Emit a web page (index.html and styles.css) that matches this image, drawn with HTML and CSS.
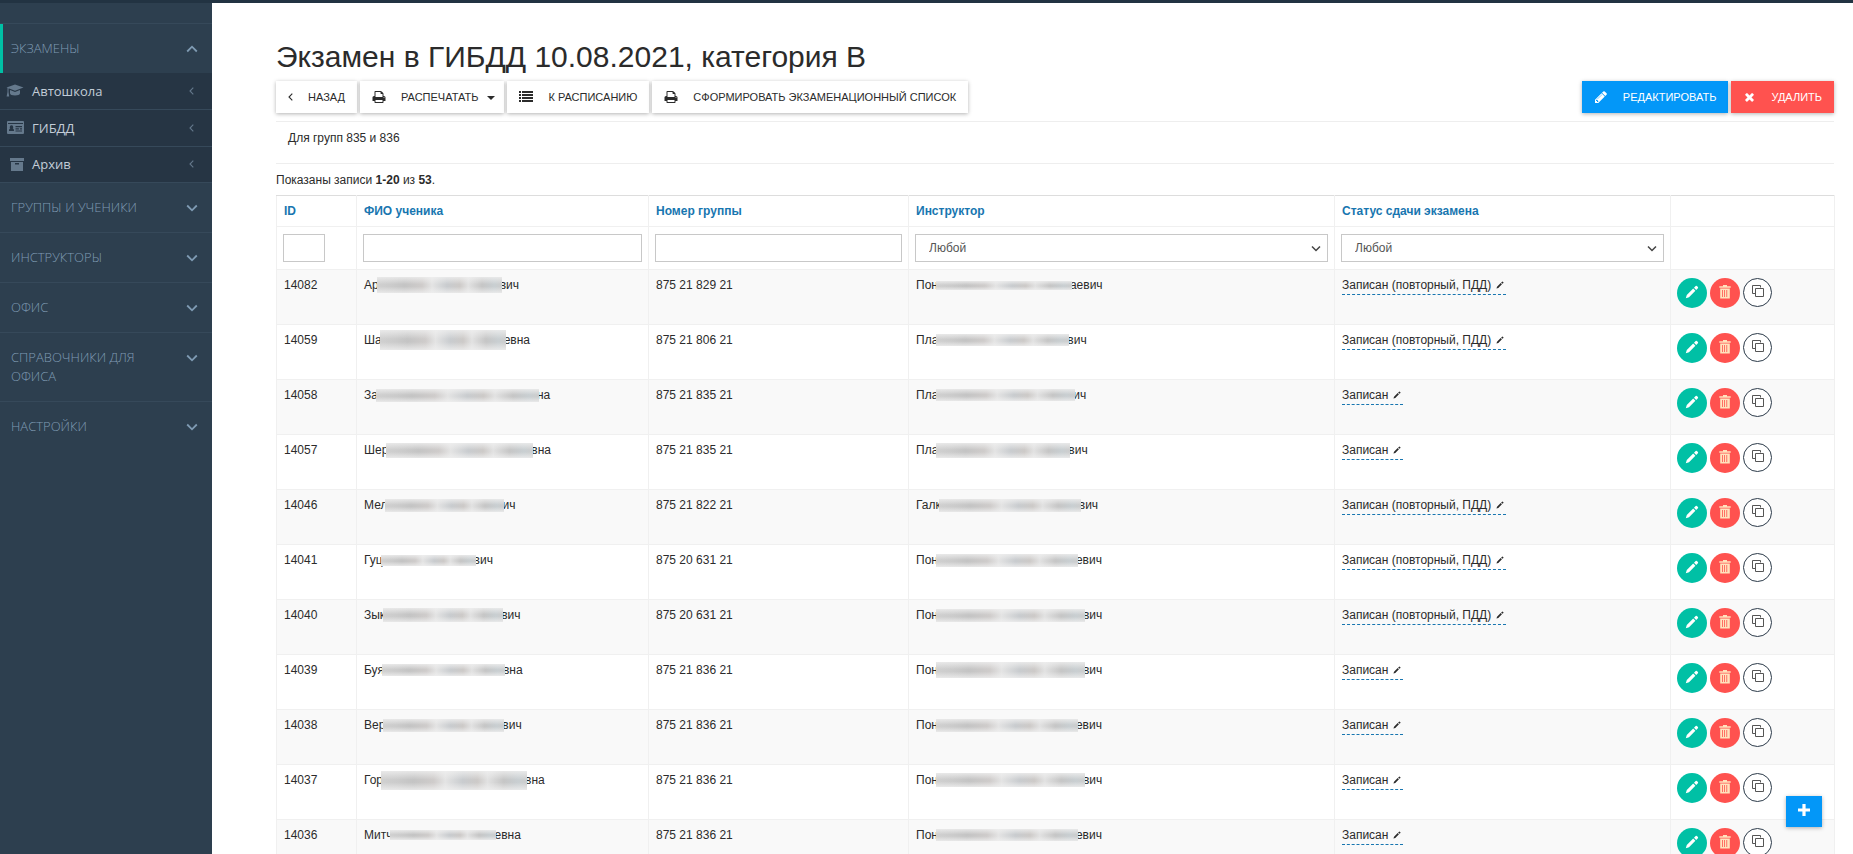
FILE: index.html
```html
<!DOCTYPE html>
<html lang="ru">
<head>
<meta charset="utf-8">
<title>Экзамен в ГИБДД</title>
<link rel="stylesheet" href="styles.css">
</head>
<body>
<svg class="sprite" aria-hidden="true">
  <symbol id="i-print" viewBox="0 0 1792 1792"><path d="M448 1536h896v-256h-896v256zm0-640h896v-384h-160q-40 0-68-28t-28-68v-160h-640v640zm1152 64q0-26-19-45t-45-19-45 19-19 45 19 45 45 19 45-19 19-45zm128 0v416q0 13-9.5 22.5t-22.5 9.5h-224v160q0 40-28 68t-68 28h-960q-40 0-68-28t-28-68v-160h-224q-13 0-22.5-9.5t-9.5-22.5v-416q0-79 56.5-135.5t135.5-56.5h64v-544q0-40 28-68t68-28h672q40 0 88 20t76 48l152 152q28 28 48 76t20 88v256h64q79 0 135.5 56.5t56.5 135.5z"/></symbol>
  <symbol id="i-pencil" viewBox="0 0 1792 1792"><path d="M491 1536l91-91-235-235-91 91v107h128v128h107zm523-928q0-22-22-22-10 0-17 7l-542 542q-7 7-7 17 0 22 22 22 10 0 17-7l542-542q7-7 7-17zm-54-192l416 416-832 832h-416v-416zm683 96q0 53-37 90l-166 166-416-416 166-165q36-38 90-38 53 0 91 38l235 234q37 39 37 91z"/></symbol>
  <symbol id="i-times" viewBox="0 0 1792 1792"><path d="M1490 1322q0 40-28 68l-136 136q-28 28-68 28t-68-28l-294-294-294 294q-28 28-68 28t-68-28l-136-136q-28-28-28-68t28-68l294-294-294-294q-28-28-28-68t28-68l136-136q28-28 68-28t68 28l294 294 294-294q28-28 68-28t68 28l136 136q28 28 28 68t-28 68l-294 294 294 294q28 28 28 68z"/></symbol>
  <symbol id="i-list" viewBox="0 0 14 12"><path d="M0 0h2v2H0zM3 0h11v2H3zM0 3h2v2H0zM3 3h11v2H3zM0 6h2v2H0zM3 6h11v2H3zM0 9h2v2H0zM3 9h11v2H3z"/></symbol>
  <symbol id="i-left" viewBox="0 0 5 8"><path d="M4.300.6 1 4l3.300 3.400" fill="none" stroke="currentColor" stroke-width="1.100"/></symbol>
  <symbol id="i-down" viewBox="0 0 12 8"><path d="M1.200 1.500 6 6.300l4.800-4.800" fill="none" stroke="currentColor" stroke-width="1.800"/></symbol>
  <symbol id="i-up" viewBox="0 0 12 8"><path d="M1.200 6.500 6 1.700l4.800 4.800" fill="none" stroke="currentColor" stroke-width="1.800"/></symbol>
  <symbol id="i-school" viewBox="0 0 18 12"><path d="M9 0l8.500 3L9 6.200.5 3zM4 5.500l5 1.900 5-1.900v3.200c0 1.300-2.200 2.300-5 2.300s-5-1-5-2.300zM1.500 3.500h1v4l.7 4.500H.6l.9-4.500z"/></symbol>
  <symbol id="i-card" viewBox="0 0 17 13"><path fill-rule="evenodd" d="M1 0h15a1 1 0 0 1 1 1v11a1 1 0 0 1-1 1H1a1 1 0 0 1-1-1V1a1 1 0 0 1 1-1zM1 2v1h15V2zM4.500 4.200a1.700 1.900 0 0 0-1.200 3.300C2.300 7.800 2 8.500 2 10h5c0-1.500-.3-2.200-1.300-2.500a1.700 1.900 0 0 0-1.200-3.300zM8.500 5v1.200H15V5zM8.500 7.200v1.200h3.400V7.200zm4.400 0v1.200H15V7.200zM8.500 9.500v1H15v-1z"/></symbol>
  <symbol id="i-box" viewBox="0 0 14 13"><path fill-rule="evenodd" d="M0 0h14v3H0zM1 4h12v9H1zM5 5v1.400h4V5z"/></symbol>
  <symbol id="i-edit" viewBox="0 0 14 14"><path d="M.8 13.200l1-3.200 6.400-6.400 2.200 2.200L4 12.200zM9 2.800l1.700-1.700q.6-.5 1.200 0l1 1q.5.600 0 1.200L11.200 5z"/></symbol>
  <symbol id="i-trash" viewBox="0 0 12 14"><path fill-rule="evenodd" d="M4 0h4v1.300h3.700v1.400H.3V1.300H4zM1.200 3.500h9.600V13.500H1.200zM3 5v7h.8V5zm2.200 0v7H6V5zm2.200 0v7h.8V5z"/></symbol>
  <symbol id="i-copy" viewBox="0 0 14 14"><path d="M4.500 9.500h-3v-8h8v2M4.500 4.500h8v8h-8z" fill="none" stroke="currentColor"/></symbol>
  <symbol id="i-plus" viewBox="0 0 12 12"><path d="M4.400 0h3.200v4.400H12v3.200H7.600V12H4.400V7.600H0V4.400h4.400z"/></symbol>
</svg>
<div class="topbar"></div>
<div class="shell">
  <nav class="sidebar">
    <ul class="menu">
      <li class="menu-item is-active">
        <a class="menu-link" href="#"><span>Экзамены</span><svg class="arrow"><use href="#i-up"/></svg></a>
        <ul class="submenu">
          <li><a class="sub-link" href="#"><svg class="sub-icon" width="18" height="13"><use href="#i-school"/></svg><span>Автошкола</span><svg class="sub-arrow"><use href="#i-left"/></svg></a></li>
          <li><a class="sub-link" href="#"><svg class="sub-icon icon-card" width="17" height="13"><use href="#i-card"/></svg><span>ГИБДД</span><svg class="sub-arrow"><use href="#i-left"/></svg></a></li>
          <li><a class="sub-link" href="#"><svg class="sub-icon icon-box" width="14" height="13"><use href="#i-box"/></svg><span>Архив</span><svg class="sub-arrow"><use href="#i-left"/></svg></a></li>
        </ul>
      </li>
      <li class="menu-item"><a class="menu-link" href="#"><span>Группы и ученики</span><svg class="arrow"><use href="#i-down"/></svg></a></li>
      <li class="menu-item"><a class="menu-link" href="#"><span>Инструкторы</span><svg class="arrow"><use href="#i-down"/></svg></a></li>
      <li class="menu-item"><a class="menu-link" href="#"><span>Офис</span><svg class="arrow"><use href="#i-down"/></svg></a></li>
      <li class="menu-item"><a class="menu-link" href="#"><span>Справочники для офиса</span><svg class="arrow"><use href="#i-down"/></svg></a></li>
      <li class="menu-item"><a class="menu-link" href="#"><span>Настройки</span><svg class="arrow"><use href="#i-down"/></svg></a></li>
    </ul>
  </nav>
  <main class="content">
    <h1>Экзамен в ГИБДД 10.08.2021, категория B</h1>
    <div class="toolbar">
      <button class="btn" type="button"><svg width="5" height="8"><use href="#i-left"/></svg>Назад</button>
      <button class="btn" type="button"><svg width="14" height="14"><use href="#i-print"/></svg>Распечатать<i class="caret"></i></button>
      <button class="btn" type="button"><svg width="14" height="12"><use href="#i-list"/></svg>К расписанию</button>
      <button class="btn" type="button"><svg width="14" height="14"><use href="#i-print"/></svg>Сформировать экзаменационный список</button>
      <span class="spacer"></span>
      <button class="btn btn-primary" type="button"><svg width="14" height="14"><use href="#i-pencil"/></svg>Редактировать</button>
      <button class="btn btn-danger" type="button"><svg width="13" height="14"><use href="#i-times"/></svg>Удалить</button>
    </div>
    <p class="note">Для групп 835 и 836</p>
    <p class="summary">Показаны записи <b>1-20</b> из <b>53</b>.</p>
    <table class="grid">
      <colgroup><col class="c-id"><col class="c-name"><col class="c-group"><col class="c-teacher"><col class="c-status"><col class="c-actions"></colgroup>
      <thead>
        <tr><th><a href="#">ID</a></th><th><a href="#">ФИО ученика</a></th><th><a href="#">Номер группы</a></th><th><a href="#">Инструктор</a></th><th><a href="#">Статус сдачи экзамена</a></th><th></th></tr>
        <tr class="filters">
          <td><input class="field field-id" type="text" aria-label="ID"></td>
          <td><input class="field" type="text" aria-label="ФИО ученика"></td>
          <td><input class="field" type="text" aria-label="Номер группы"></td>
          <td><div class="select"><select class="field" aria-label="Инструктор"><option>Любой</option></select><svg width="10" height="7"><use href="#i-down"/></svg></div></td>
          <td><div class="select"><select class="field" aria-label="Статус сдачи экзамена"><option>Любой</option></select><svg width="10" height="7"><use href="#i-down"/></svg></div></td>
          <td></td>
        </tr>
      </thead>
      <tbody id="rows"></tbody>
    </table>
  </main>
</div>
<button class="fab" type="button" aria-label="Добавить"><svg width="12" height="12"><use href="#i-plus"/></svg></button>
<script src="rows.js"></script>
</body>
</html>
```
FILE: rows.js
```js
// id, student [start, hidden width, hidden height, end], group, instructor [same], status
const full = 'Записан (повторный, ПДД)';
const short = 'Записан';
const rows = [
  [14082, ['Ар', 125, 16, 'вич'], '875 21 829 21', ['Пон', 136, 9, 'аевич'], full],
  [14059, ['Ша', 126, 20, 'евна'], '875 21 806 21', ['Пла', 133, 12, 'вич'], full],
  [14058, ['За', 163, 13, 'на'], '875 21 835 21', ['Пла', 139, 12, 'ич'], short],
  [14057, ['Шер', 147, 15, 'вна'], '875 21 835 21', ['Пла', 134, 15, 'вич'], short],
  [14046, ['Мел', 119, 13, 'ич'], '875 21 822 21', ['Галк', 142, 13, 'вич'], full],
  [14041, ['Гуц', 95, 11, 'вич'], '875 20 631 21', ['Пон', 142, 13, 'евич'], full],
  [14040, ['Зык', 120, 14, 'вич'], '875 20 631 21', ['Пон', 149, 13, 'вич'], full],
  [14039, ['Буя', 123, 12, 'вна'], '875 21 836 21', ['Пон', 149, 16, 'вич'], short],
  [14038, ['Вер', 121, 13, 'вич'], '875 21 836 21', ['Пон', 142, 13, 'евич'], short],
  [14037, ['Гор', 146, 19, 'вна'], '875 21 836 21', ['Пон', 149, 14, 'вич'], short],
  [14036, ['Митч', 106, 10, 'евна'], '875 21 836 21', ['Пон', 142, 12, 'евич'], short]
];

const icon = (name, w, h) => `<svg width="${w}" height="${h}"><use href="#i-${name}"/></svg>`;
const person = ([start, w, h, end]) =>
  `<span class="person">${start}<span class="hidden-part" style="width:${w}px;height:${h}px"></span>${end}</span>`;

document.getElementById('rows').innerHTML = rows.map(([id, student, group, teacher, status]) => `
  <tr>
    <td>${id}</td>
    <td>${person(student)}</td>
    <td>${group}</td>
    <td>${person(teacher)}</td>
    <td><a class="status" href="#">${status}${icon('edit', 8, 8)}</a></td>
    <td class="actions-cell"><div class="actions">
      <button class="round round-edit" type="button" aria-label="Изменить">${icon('edit', 14, 14)}</button>
      <button class="round round-delete" type="button" aria-label="Удалить">${icon('trash', 12, 14)}</button>
      <button class="round round-copy" type="button" aria-label="Копировать">${icon('copy', 14, 14)}</button>
    </div></td>
  </tr>`).join('');
```
FILE: styles.css
```css
* { box-sizing: border-box; }

body {
  margin: 0;
  height: 100vh;
  overflow: hidden;
  display: flex;
  flex-direction: column;
  background: #fff;
  color: #2b2b2b;
  font: 12px/18px "Liberation Sans", Arial, sans-serif;
}

svg { fill: currentColor; flex: none; }
a { color: inherit; text-decoration: none; }
ul { list-style: none; margin: 0; padding: 0; }
.sprite { position: absolute; width: 0; height: 0; }

.topbar { flex: none; height: 3px; background: #223342; }
.shell { flex: 1; display: flex; min-height: 0; }

.sidebar {
  flex: none;
  width: 212px;
  padding-top: 20px;
  background: #2d3f4f;
  font-family: "Open Sans", sans-serif;
}
.menu-item { border-top: 1px solid #36495a; }
.menu-link {
  display: flex;
  justify-content: space-between;
  align-items: flex-start;
  padding: 15px 14px 15px 11px;
  color: #7f9bb3;
  font-size: 13px;
  font-weight: 300;
  line-height: 19px;
  text-transform: uppercase;
}
.menu-link span { max-width: 150px; }
.arrow { width: 12px; height: 8px; margin-top: 6px; }
.is-active > .menu-link { box-shadow: inset 3px 0 #00c0a5; }
.submenu { background: #263544; }
.submenu li + li { border-top: 1px solid #36495a; }
.sub-link {
  display: flex;
  align-items: center;
  height: 36px;
  padding: 0 18px 1px 6px;
  color: #c3cdd8;
  font-size: 13px;
}
.submenu li:last-child .sub-link { height: 35px; }
.sub-link span { flex: 1; margin-left: 8px; }
.sub-icon { color: #65798c; }
.icon-card { margin-left: 1px; }
.icon-box { margin-left: 4px; }
.sub-arrow { width: 5px; height: 8px; color: #65798c; }

.content { flex: 1; min-width: 0; padding: 32px 19px 0 64px; }
h1 { margin: 0 0 3px; font-size: 30px; font-weight: 400; line-height: 43px; }

.toolbar { display: flex; gap: 3px; padding-bottom: 8px; border-bottom: 1px solid #eee; }
.spacer { flex: 1; }
.btn {
  display: flex;
  align-items: center;
  gap: 15px;
  height: 32px;
  padding: 0 12px;
  border: 0;
  background: #fff;
  color: #2b2b2b;
  font: 11px/16px "Liberation Sans", Arial, sans-serif;
  text-transform: uppercase;
  box-shadow: 0 1px 4px rgba(0, 0, 0, .3);
}
.btn-primary { background: #0397f8; color: #fff; }
.btn-danger { background: #ff524f; color: #fff; }
.caret { margin: 2px -3px 0 -6px; border: 4px solid transparent; border-top-color: #2b2b2b; border-bottom: 0; }

.note { margin: 0; padding: 7px 12px 16px; border-bottom: 1px solid #eee; }
.summary { margin: 0; padding: 7px 0 6px; }

.grid { width: 100%; table-layout: fixed; border-collapse: collapse; }
.c-id { width: 80px; }
.c-name { width: 292px; }
.c-group { width: 260px; }
.c-teacher { width: 426px; }
.c-status { width: 336px; }
.c-actions { width: 164px; }
.grid th, .grid td { padding: 6px 7px; border: 1px solid #f0f0f0; text-align: left; vertical-align: top; }
.grid th { height: 30px; border-top-color: #ddd; color: #1876b0; }
.grid tbody td { height: 55px; }
.grid tbody tr:nth-child(odd) { background: #f9f9f9; }
.grid .filters td { height: 43px; padding: 7px 6px; }
.field {
  display: block;
  width: 100%;
  height: 28px;
  padding: 0 12px;
  border: 1px solid #c8c8c8;
  border-radius: 0;
  background: #fff;
  color: #555;
  font: inherit;
}
.field-id { width: 42px; }
.select { display: grid; align-items: center; }
.select > * { grid-area: 1 / 1; }
.select select { appearance: none; padding: 0 13px; }
.select svg { justify-self: end; margin-right: 7px; color: #444; stroke-width: 3px; pointer-events: none; }

.person { display: flex; align-items: center; height: 18px; }
.hidden-part {
  z-index: 1;
  margin: 0 -2px;
  background:
    linear-gradient(rgba(240, 240, 240, .8), rgba(240, 240, 240, 0) 45%, rgba(240, 240, 240, 0) 60%, rgba(240, 240, 240, .8)),
    linear-gradient(90deg, #d0d0d0, #cbcbcb 12%, #c4c4c4 22%, #cfcccb 36%, #e4e4e4 44%, #c9cccf 56%, #cdcac8 66%, #e2e2e2 73%, #c6c6c6 84%, #c9cfd2 94%, #cdcdcd);
}

.status { display: inline-flex; align-items: center; gap: 5px; padding-right: 2px; border-bottom: 1px dashed #1876b0; }
.grid .actions-cell { padding: 6px; }
.actions { display: flex; gap: 3px; padding-top: 2px; }
.round {
  display: flex;
  align-items: center;
  justify-content: center;
  width: 30px;
  height: 30px;
  padding: 0;
  border: 0;
  border-radius: 50%;
  color: #fff;
}
.round svg { margin-bottom: 3px; }
.round-edit { background: #00c0a5; }
.round-delete { background: #ff524f; color: #ffe3bd; }
.round-copy { height: 29px; width: 29px; border: 1px solid #2b3a49; background: #fff; color: #555; }

.fab {
  position: fixed;
  right: 31px;
  bottom: 27px;
  display: flex;
  align-items: center;
  justify-content: center;
  width: 36px;
  height: 31px;
  padding: 0 0 4px;
  border: 0;
  background: #0397f8;
  color: #fff;
  box-shadow: 0 1px 4px rgba(0, 0, 0, .3);
}
```
